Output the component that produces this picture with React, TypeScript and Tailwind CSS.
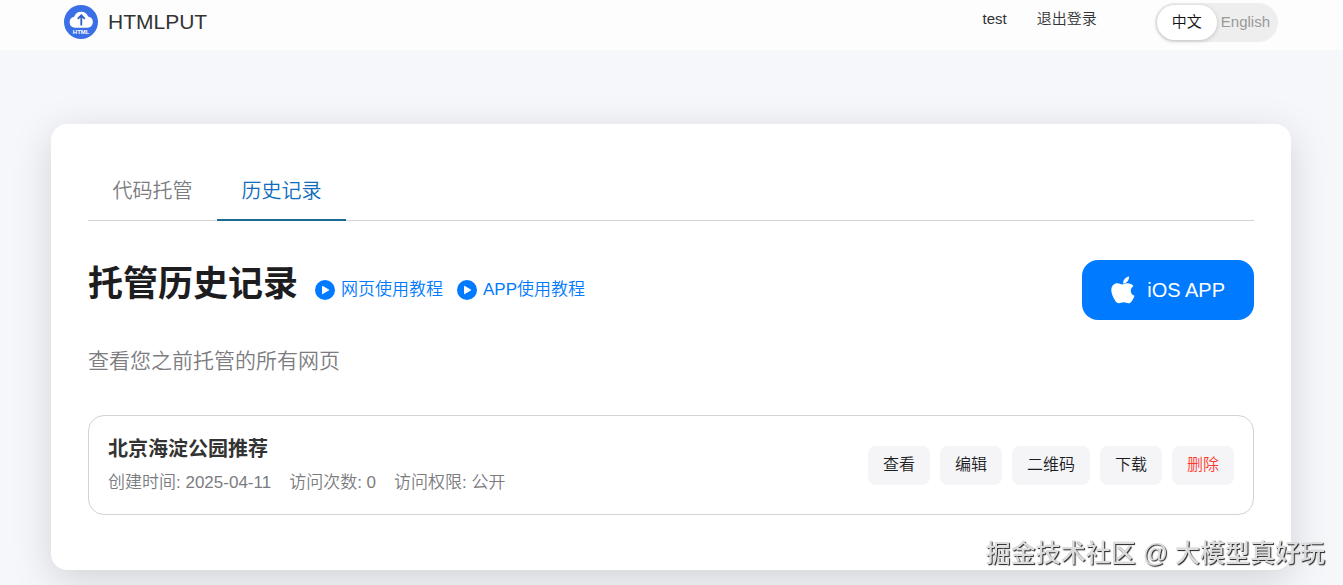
import { useState } from 'react';
import clsx from 'clsx';

const tabs = ['代码托管', '历史记录'];

const tutorials = [
  { label: '网页使用教程', href: '#web-tutorial' },
  { label: 'APP使用教程', href: '#app-tutorial' },
];

const records = [
  {
    title: '北京海淀公园推荐',
    createdAt: '2025-04-11',
    visits: 0,
    access: '公开',
  },
];

const actions = ['查看', '编辑', '二维码', '下载', '删除'];

function Logo() {
  return (
    <svg viewBox="0 0 34 34" className="size-[34px]" aria-hidden="true">
      <circle cx="17" cy="17" r="17" fill="#3a6fe6" />
      <path
        d="M11 22.800a5.600 5.600 0 0 1-.8-11.100 7.400 7.400 0 0 1 13.900-.2 5.700 5.700 0 0 1-.5 11.300z"
        fill="#fff"
      />
      <path
        d="M17.300 20.500v-9M13.800 13.800l3.500-3.500 3.500 3.500"
        fill="none"
        stroke="#2f5fc4"
        strokeWidth="1.8"
      />
      <text
        x="17.2"
        y="29.4"
        textAnchor="middle"
        fill="#fff"
        className="font-['Liberation_Sans'] text-[6px] font-bold"
      >
        HTML
      </text>
    </svg>
  );
}

function PlayIcon() {
  return (
    <svg viewBox="0 0 20 20" className="size-5" aria-hidden="true">
      <circle cx="10" cy="10" r="10" fill="#007aff" />
      <path
        d="M7.500 6.300v7.400l6.300-3.700z"
        fill="#fff"
        stroke="#fff"
        strokeLinejoin="round"
      />
    </svg>
  );
}

function AppleIcon() {
  return (
    <svg
      viewBox="0 0 24 28"
      className="h-7 w-6"
      fill="currentColor"
      aria-hidden="true"
    >
      <path d="M18 .5c.2 2-.6 3.700-1.600 4.900-1.100 1.300-2.700 2.200-4.200 2.100-.2-1.800.6-3.600 1.600-4.700C14.900 1.500 16.600.6 18 .5z" />
      <path d="M22.500 10c-1.700 1.100-2.700 2.600-2.700 4.700 0 2.400 1.400 4.300 3.700 5.100-.5 1.600-1.300 3.200-2.300 4.600-1.100 1.600-2.200 2.900-3.900 2.900-1.700 0-2.500-1-4.800-1-2.200 0-2.900 1-4.500 1-1.700 0-3-1.500-4.100-3.100C1.800 21 .3 17 .3 14.200c0-4.400 2.900-6.900 6-6.900 1.900 0 3.600 1.200 4.800 1.200 1.100 0 2.900-1.300 5.100-1.200 2.700.1 4.800.9 6.300 2.700z" />
    </svg>
  );
}

function LanguageSwitch() {
  const [lang, setLang] = useState('zh');

  const itemClass = (value: string) =>
    clsx(
      'h-[35px] rounded-full text-[15px]',
      lang === value
        ? 'bg-white px-[15px] text-[#111] shadow-[0_1px_4px_rgba(0,0,0,0.2)]'
        : 'px-1 text-[#999]'
    );

  return (
    <div className="flex items-center rounded-full bg-[#eeeeee] py-0.5 pr-1 pl-0.5">
      <button className={itemClass('zh')} onClick={() => setLang('zh')}>
        中文
      </button>
      <button className={itemClass('en')} onClick={() => setLang('en')}>
        English
      </button>
    </div>
  );
}

function Header() {
  return (
    <header className="flex h-[50px] items-center justify-between bg-[#fdfdfd] pr-[65px] pb-1.5 pl-16">
      <a href="#home" className="flex items-center gap-2.5">
        <Logo />
        <span className="text-[21px] text-[#333]">HTMLPUT</span>
      </a>
      <nav className="flex items-center">
        <div className="mr-[58px] flex gap-[30px] pb-1.5 text-[15px] text-[#333]">
          <a href="#account">test</a>
          <a href="#logout">退出登录</a>
        </div>
        <LanguageSwitch />
      </nav>
    </header>
  );
}

export default function App() {
  const [activeTab, setActiveTab] = useState('历史记录');

  return (
    <div className="min-h-screen bg-[#f5f7fb] pb-[15px] font-['Liberation_Sans','Noto_Sans_CJK_SC',sans-serif] font-[350]">
      <Header />

      <main className="mt-[74px] mr-[52px] ml-[51px] rounded-2xl bg-white px-[37px] pt-[37px] pb-[55px] shadow-[0_10px_40px_rgba(0,0,0,0.15)]">
        {/* Tabs */}
        <div className="flex border-b border-[#d2d5d9]">
          {tabs.map((tab) => (
            <button
              key={tab}
              onClick={() => setActiveTab(tab)}
              className={clsx(
                '-mb-px h-[60px] min-w-[129px] border-b-2 px-6 pt-0.5 text-xl',
                activeTab === tab
                  ? 'border-[#1b6a93] text-[#0f6cbd]'
                  : 'border-transparent text-[#7c7c80]'
              )}
            >
              {tab}
            </button>
          ))}
        </div>

        {/* Title row */}
        <div className="mt-[39px] flex items-start justify-between">
          <div className="flex items-center">
            <h1 className="text-[35px] leading-12 font-bold text-[#1d1d1f]">
              托管历史记录
            </h1>
            <div className="ml-[17px] flex gap-[14px] pt-3">
              {tutorials.map((item) => (
                <a
                  key={item.href}
                  href={item.href}
                  className="flex items-center gap-1.5 text-[17px] text-[#007aff]"
                >
                  <PlayIcon />
                  {item.label}
                </a>
              ))}
            </div>
          </div>
          <a
            href="#ios"
            className="flex h-[60px] items-center gap-3 rounded-2xl bg-[#007aff] px-[29px] text-xl text-white"
          >
            <AppleIcon />
            iOS APP
          </a>
        </div>

        <p className="mt-[25px] text-[21px] leading-8 text-[#7c7c80]">
          查看您之前托管的所有网页
        </p>

        {/* Records */}
        <ul className="mt-[38px]">
          {records.map((record) => (
            <li
              key={record.title}
              className="flex h-[100px] items-center justify-between rounded-2xl border border-[#d2d2d7] px-[19px]"
            >
              <div className="pt-1">
                <h2 className="text-xl leading-8 font-bold text-[#333]">
                  {record.title}
                </h2>
                <div className="flex gap-[18px] text-[17px] leading-9 text-[#7c7c80]">
                  <span>创建时间: {record.createdAt}</span>
                  <span>访问次数: {record.visits}</span>
                  <span>访问权限: {record.access}</span>
                </div>
              </div>
              <div className="flex gap-2.5">
                {actions.map((action) => (
                  <button
                    key={action}
                    className={clsx(
                      'h-[39px] rounded-lg bg-[#f5f5f7] px-[15px] text-base',
                      action === '删除' ? 'text-[#ff3b30]' : 'text-[#1d1d1f]'
                    )}
                  >
                    {action}
                  </button>
                ))}
              </div>
            </li>
          ))}
        </ul>
      </main>

      {/* Watermark */}
      <div className="pointer-events-none fixed right-[18px] bottom-[14px] text-[25px] leading-9 font-medium text-[#dcdcdc] [text-shadow:1px_1px_1px_#222]">
        掘金技术社区 @ 大模型真好玩
      </div>
    </div>
  );
}
